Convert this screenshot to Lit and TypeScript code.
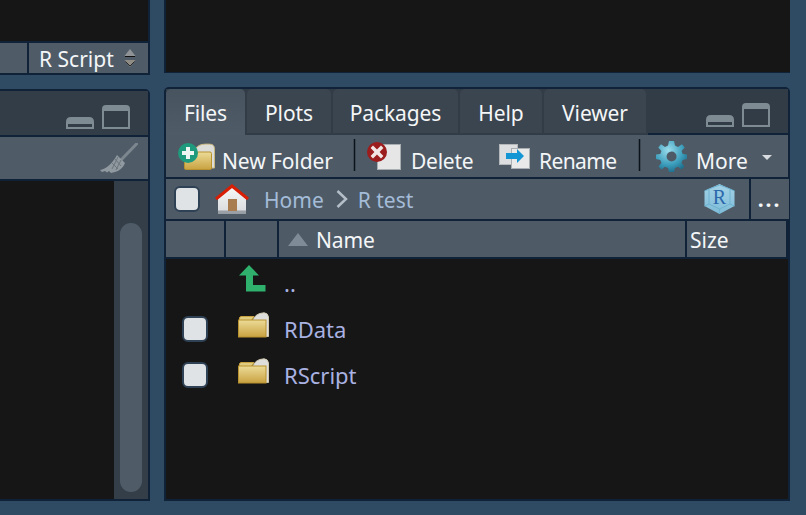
import { LitElement, html, css, svg } from "lit";
import { customElement } from "lit/decorators.js";

const defs = svg`
  <linearGradient id="fold" x1="0" y1="0" x2="0" y2="1"><stop offset="0" stop-color="#ecdc98"/><stop offset="1" stop-color="#c9a241"/></linearGradient>
  <radialGradient id="gear" cx=".4" cy=".3" r=".8"><stop offset="0" stop-color="#9adcec"/><stop offset=".6" stop-color="#3a9cba"/><stop offset="1" stop-color="#17607e"/></radialGradient>
  <linearGradient id="door" x1="0" y1="0" x2="0" y2="1"><stop offset="0" stop-color="#f8f8f8"/><stop offset="1" stop-color="#d8dadd"/></linearGradient>
  <linearGradient id="cube" x1="0" y1="0" x2="0" y2="1"><stop offset="0" stop-color="#a4d2e6"/><stop offset="1" stop-color="#7ebcd8"/></linearGradient>`;

const folderIco = html`<svg class="folder" width="31" height="26" viewBox="0 0 31 26">
  <defs>${defs}</defs>
  <path d="M14 9 L18 3.500 Q21 1 26 .8 Q30 1 30.500 5 V24.500 H27 V9 Z" fill="#dededc" stroke="#cfc9b0"/>
  <path d="M1.500 9 V5.500 L3 4.500 H16 L13 9 Z" fill="#e0cc80" stroke="#c9a33f"/>
  <rect x=".5" y="8" width="27.500" height="17" fill="url(#fold)" stroke="#b8922f"/>
</svg>`;

const newFolderIco = html`<svg width="37" height="27" viewBox="0 0 37 27">
  <defs>${defs}</defs>
  <path d="M14 8 L21 2.500 C24 .8 31 .8 34 1.500 C36 2.500 36.500 4 36.500 6 V25 H33 V10 H14 Z" fill="#dcdcd8" stroke="#c8b67c"/>
  <rect x="6.500" y="9" width="27" height="17.500" rx="1.500" fill="url(#fold)" stroke="#b8922f"/>
  <circle cx="10" cy="10" r="10" fill="#1f9a7c"/>
  <path d="M8 4 H12 V8 H16 V12 H12 V16 H8 V12 H4 V8 H8 Z" fill="#eef6f2"/>
</svg>`;

const deleteIco = html`<svg width="34" height="28" viewBox="0 0 34 28">
  <rect x="10.500" y="2.500" width="23" height="25" fill="#e6e6e6" stroke="#a9aeb2"/>
  <circle cx="10" cy="10" r="10" fill="#9c1d1d"/>
  <path d="M6 3.600 L10 7.400 L14 3.600 L16.400 6 L12.600 10 L16.400 14 L14 16.400 L10 12.600 L6 16.400 L3.600 14 L7.400 10 L3.600 6 Z" fill="#f1e6e4"/>
</svg>`;

const renameIco = html`<svg width="31" height="25" viewBox="0 0 31 25">
  <rect x=".5" y=".5" width="18" height="20" fill="#dcdee0" stroke="#b4b8bb"/>
  <rect x="12.500" y="4.500" width="18" height="20" fill="#e9e9e9" stroke="#a9aeb2"/>
  <path d="M7 9 H18 V5 L25 12 L18 19 V15 H7 Z" fill="#1596d4"/>
</svg>`;

const gearIco = html`<svg width="31" height="31" viewBox="0 0 31 31">
  <defs>${defs}</defs>
  <path fill="url(#gear)" fill-rule="evenodd" d="M13 0 H18 L19 4.600 L22 5.900 L26 3.300 L28.700 6.600 L25.600 10 L26.700 13 L31 13.600 V18 L26.700 18.900 L25.500 22 L28.500 25.500 L25.500 28.500 L22 25.800 L19 27 L18 31 H13 L12 27 L9 25.800 L5.500 28.500 L2.500 25.500 L5.500 22 L4.300 18.900 L0 18 V13.600 L4.300 13 L5.400 10 L2.300 6.600 L5 3.300 L9 5.900 L12 4.600 Z M15.500 10.500 A5 5 0 1 0 15.600 20.500 A5 5 0 1 0 15.500 10.500 Z"/>
</svg>`;

const homeIco = html`<svg width="34" height="30" viewBox="0 0 34 30">
  <defs>${defs}</defs>
  <path d="M3 29.500 V13 L17 2 L31 13 V29.500 Z" fill="url(#door)"/>
  <rect x="3" y="26.500" width="28" height="3" fill="#9aa0a6"/>
  <rect x="13" y="15" width="9" height="12" fill="#a97c50"/>
  <path d="M1 15 L17 2 L33 15" fill="none" stroke="#d81e05" stroke-width="3"/>
</svg>`;

const cubeIco = html`<svg width="31" height="30" viewBox="0 0 31 30">
  <defs>${defs}</defs>
  <path d="M15.500 0 L30.500 7 V22 L15.500 30 L.5 22 V7 Z" fill="url(#cube)"/>
  <path d="M.5 7 L5 5 L15.500 1 L26 5 L30.500 7 M5 5 V20 L15.500 25 L26 20 V5 M.5 22 L5 20 M30.500 22 L26 20 M15.500 25 V30" fill="none" stroke="#6eb2d0" stroke-width="1"/>
  <text x="15.500" y="20" text-anchor="middle" font-family="Liberation Serif" font-size="20" fill="#2b68ab">R</text>
</svg>`;

const minIco = html`<svg width="28" height="12" viewBox="0 0 28 12">
  <path fill-rule="evenodd" fill="#7f8b93" d="M5 0 H23 Q28 0 28 5 V12 H0 V5 Q0 0 5 0 Z M2 7 V10 H26 V7 Z"/>
</svg>`;

const maxIco = html`<svg width="28" height="24" viewBox="0 0 28 24">
  <path fill-rule="evenodd" fill="#7f8b93" d="M4 0 H24 Q28 0 28 4 V24 H0 V4 Q0 0 4 0 Z M2 6 V22 H26 V6 Z"/>
</svg>`;

const broomIco = html`<svg width="38" height="30" viewBox="0 0 38 30">
  <path d="M36.500 1 L21 17" stroke="#7b868e" stroke-width="3" stroke-linecap="round"/>
  <path d="M17 12 L25 20 C23 25 19 28 15 29 L11 30 L9 28 L7 29.500 L5 28 L2 29 L0 27 C6 26 12 21 17 12 Z" fill="#8f999f"/>
  <path d="M15 16 L21 23 M12 20 L18 26 M18 14 L12 26 M21 17 L16 27" stroke="#6a757c" stroke-width="1"/>
</svg>`;

@customElement("app-root")
export class AppRoot extends LitElement {
  static styles = css`
    :host { display: block; width: 806px; height: 515px; overflow: hidden; background: #2f4a63;
      font-family: "Noto Sans", "Open Sans", sans-serif; font-size: 21px; color: #f4f6f8; }
    svg { display: block; flex: none; }
    .root { display: grid; grid-template-columns: 150px 626px; column-gap: 14px; height: 501px; }
    .col { display: flex; flex-direction: column; min-height: 0; }
    .panel { background: #0f2238; display: flex; flex-direction: column; min-height: 0; overflow: hidden; }
    .black { background: #161616; }

    .lt { height: 75px; padding-right: 2px; padding-bottom: 2px; box-sizing: border-box; }
    .lt .black { height: 41px; }
    .statusbar { margin-top: 2px; flex: 1; display: grid; grid-template-columns: 27px 1fr; column-gap: 2px; }
    .statuscell { background: #4f5c68; display: flex; align-items: center; padding-left: 10px; gap: 10px; }
    .statuscell:first-child { padding: 0; }
    .statuscell span { padding-top: 2px; }
    .lb { margin-top: 14px; flex: 1; padding: 2px 2px 2px 0; border-top-right-radius: 5px; }
    .lbar { height: 44px; box-sizing: border-box; flex: none; background: #333d47; display: flex; justify-content: flex-end; align-items: flex-end; gap: 8px; padding: 0 18px 6px 0; }
    .ltool { height: 42px; flex: none; margin-top: 2px; background: #4f5c68; display: flex; justify-content: flex-end; align-items: center; padding-right: 10px; }
    .lbody { margin-top: 2px; flex: 1; display: grid; grid-template-columns: 114px 34px; min-height: 0; }
    .track { background: #343e48; padding: 42px 6px 7px; display: flex; }
    .thumb { flex: 1; background: #4f5c68; border-radius: 11px; }

    .rt { height: 73px; padding: 0 0 1px 2px; box-sizing: border-box; }
    .rt .black { flex: 1; }
    .rb { margin-top: 14px; flex: 1; padding: 2px; border-radius: 5px 5px 0 0; }
    .tabbar { height: 46px; flex: none; background: #323c46; display: grid; grid-template-columns: 79px 84px 125px 82px 102px 1fr; column-gap: 2px; }
    .tab { background: #3b454f; border-radius: 5px 5px 0 0; margin-bottom: 2px; display: flex; align-items: center; justify-content: center; padding-top: 4px; letter-spacing: -0.1px; }
    .tab.on { background: linear-gradient(#47545f, #4f5c68); margin-bottom: 0; padding-bottom: 2px; }
    .tabbar .rest { display: flex; justify-content: flex-end; align-items: flex-end; gap: 8px; padding: 0 18px 8px 0; box-shadow: inset 0 -2px 0 #0f2238; }
    .tool { height: 42px; flex: none; background: #4e5b67; display: flex; align-items: center; }
    .item { display: flex; align-items: center; flex: none; }
    .item span { padding-top: 9px; }
    .i1 { margin-left: 12px; width: 175px; gap: 7px; letter-spacing: -0.1px; }
    .i2 { margin-left: 11px; width: 132px; gap: 10px; letter-spacing: -0.25px; }
    .i3 { width: 139px; gap: 9px; letter-spacing: -0.6px; }
    .i4 { margin-left: 15px; gap: 9px; }
    .bsep { width: 3px; height: 32px; flex: none; margin-top: -3px; background: linear-gradient(90deg, #55626d, #0a121c 50%, #55626d); }
    .caret { margin-left: 5px; margin-top: 3px; width: 0; height: 0; border: 5.500px solid transparent; border-top: 5.500px solid #d8dce0; border-bottom: 0; }
    .path { height: 40px; flex: none; margin-top: 2px; display: grid; grid-template-columns: 583px 38px; column-gap: 1.500px; }
    .pathl { background: #4e5b67; display: flex; align-items: center; padding-left: 8px; padding-right: 14px; }
    .check { width: 26px; height: 26px; box-sizing: border-box; flex: none; background: #dfe3e6; border: 2px solid #2f4155; border-radius: 6px; }
    .pathl svg:nth-child(2) { margin-left: 15px; }
    .crumb { color: #a4bcd8; margin-left: 15px; padding-top: 2px; }
    .chev { margin-left: 12px; }
    .crumb.c2 { margin-left: 10px; }
    .space { flex: 1; }
    .dots { background: #4e5b67; display: flex; justify-content: center; align-items: flex-end; line-height: 1; padding-bottom: 9px; font-size: 21px; font-weight: 700; letter-spacing: 2px; box-sizing: border-box; }
    .thead { height: 36px; flex: none; margin-top: 2px; display: grid; grid-template-columns: 58px 51px 406px 99px; column-gap: 2px; margin-bottom: 2px; }
    .th { background: #4e5b67; display: flex; align-items: center; padding-top: 2px; box-sizing: border-box; }
    .name { padding-left: 9px; gap: 8px; letter-spacing: -0.1px; }
    .tri { width: 0; height: 0; margin-bottom: 2px; border: 10px solid transparent; border-top: 0; border-bottom: 13px solid #7f8b97; }
    .size { padding-left: 3px; }
    .files { background: #161616; flex: 1; min-height: 0; padding-top: 1px; }
    .row { height: 46px; display: grid; grid-template-columns: 72px 46px 1fr; align-items: center; color: #a9b2e2; font-size: 22px; }
    .row .check { margin-left: 16px; grid-column: 1; }
    .row svg { grid-column: 2; align-self: start; margin-top: 6px; }
    .row svg.up { margin-left: 1px; margin-top: 5px; }
    .row .lbl { grid-column: 3; }
  `;

  render() {
    return html`<div class="root">
      <div class="col">
        <div class="panel lt">
          <div class="black"></div>
          <div class="statusbar">
            <div class="statuscell"></div>
            <div class="statuscell"><span>R Script</span>
              <svg width="12" height="18" viewBox="0 0 12 18">
                <path d="M6 0 L11.500 7 H.5 Z" fill="#8f9396"/>
                <path d="M1 7.500 H11 M1 11.500 H11" stroke="#111" stroke-width="1"/>
                <path d="M.5 11 H11.500 L6 18 Z" fill="#8f8c86"/>
                <path d="M1.500 12.500 L6 17 L10.500 12.500" fill="none" stroke="#2c2c2c" stroke-width="1"/>
              </svg>
            </div>
          </div>
        </div>
        <div class="panel lb">
          <div class="lbar">${minIco}${maxIco}</div>
          <div class="ltool">${broomIco}</div>
          <div class="lbody">
            <div class="black"></div>
            <div class="track"><div class="thumb"></div></div>
          </div>
        </div>
      </div>
      <div class="col">
        <div class="panel rt"><div class="black"></div></div>
        <div class="panel rb">
          <div class="tabbar">
            <div class="tab on">Files</div>
            <div class="tab">Plots</div>
            <div class="tab">Packages</div>
            <div class="tab">Help</div>
            <div class="tab">Viewer</div>
            <div class="rest">${minIco}${maxIco}</div>
          </div>
          <div class="tool">
            <div class="item i1">${newFolderIco}<span>New Folder</span></div>
            <div class="bsep"></div>
            <div class="item i2">${deleteIco}<span>Delete</span></div>
            <div class="item i3">${renameIco}<span>Rename</span></div>
            <div class="bsep"></div>
            <div class="item i4">${gearIco}<span>More</span><div class="caret"></div></div>
          </div>
          <div class="path">
            <div class="pathl">
              <div class="check"></div>
              ${homeIco}
              <span class="crumb">Home</span>
              <svg class="chev" width="12" height="18" viewBox="0 0 12 18"><path d="M1.500 1 L10 9 L1.500 17" fill="none" stroke="#b4bec8" stroke-width="2.500"/></svg>
              <span class="crumb c2">R test</span>
              <div class="space"></div>
              ${cubeIco}
            </div>
            <div class="dots">...</div>
          </div>
          <div class="thead">
            <div class="th"></div>
            <div class="th"></div>
            <div class="th name"><div class="tri"></div><span>Name</span></div>
            <div class="th size">Size</div>
          </div>
          <div class="files">
            <div class="row"><span></span><svg class="up" width="27" height="27" viewBox="0 0 27 27"><path d="M10 0 L20 10.500 H14 V20 H26.500 V26.500 H7 V10.500 H0 Z" fill="#2fb06d"/></svg><span class="lbl">..</span></div>
            <div class="row"><div class="check"></div>${folderIco}<span class="lbl">RData</span></div>
            <div class="row"><div class="check"></div>${folderIco}<span class="lbl">RScript</span></div>
          </div>
        </div>
      </div>
    </div>`;
  }
}
